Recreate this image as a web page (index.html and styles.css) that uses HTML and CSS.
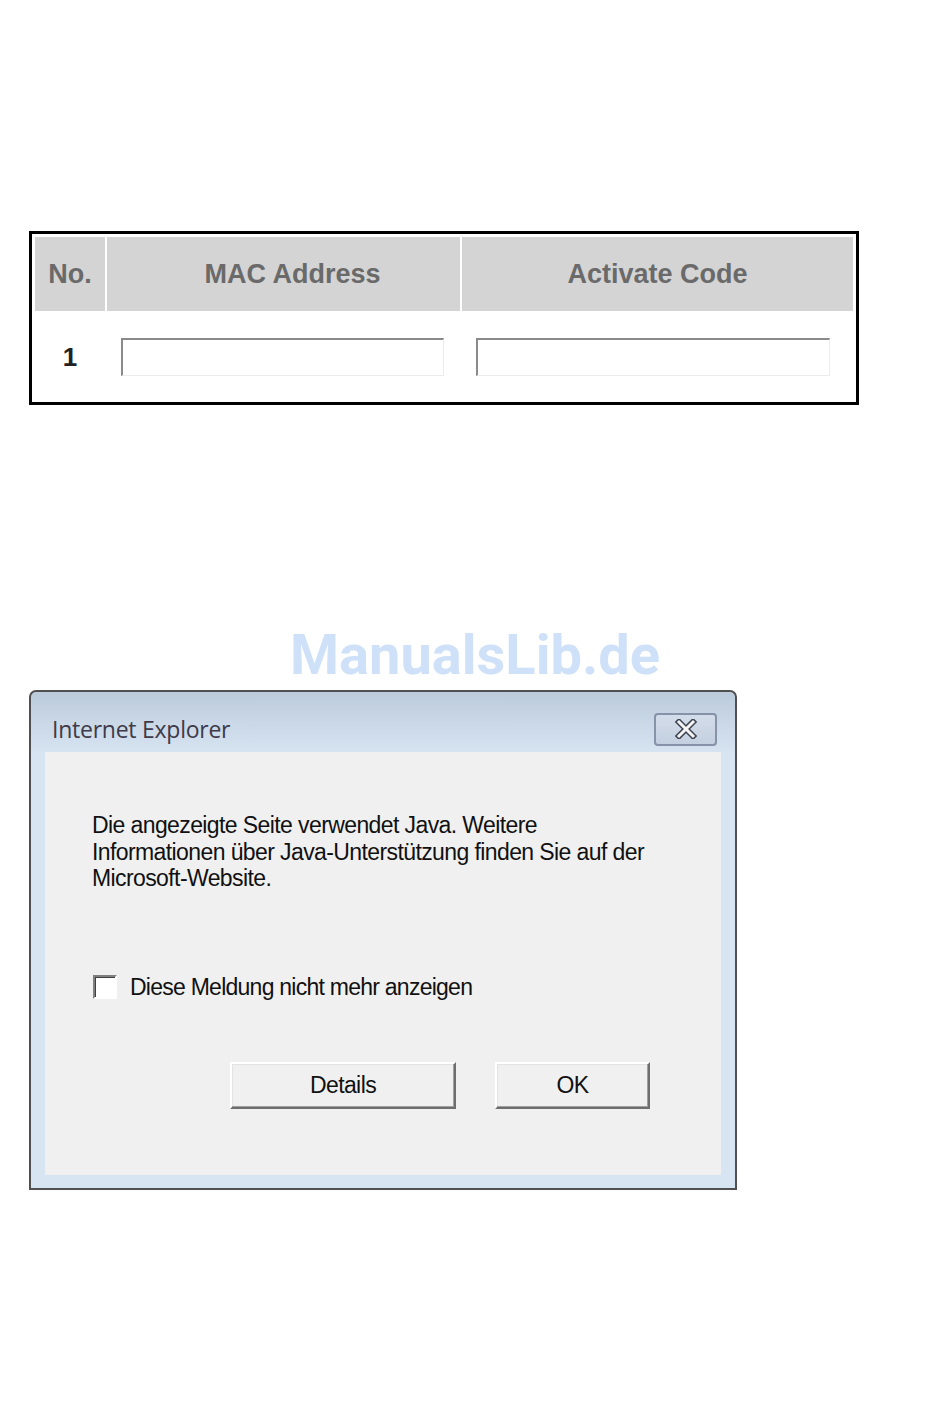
FILE: index.html
```html
<!DOCTYPE html>
<html lang="de">
<head>
  <meta charset="UTF-8" />
  <title>Activate Code</title>
  <link rel="stylesheet" href="styles.css">
</head>
<body>
  <div class="page">
    <table class="code-table">
      <tr>
        <th class="col-no">No.</th>
        <th class="col-mac">MAC Address</th>
        <th class="col-code">Activate Code</th>
      </tr>
      <tr>
        <td class="cell-no">1</td>
        <td><input type="text" class="field field-mac"></td>
        <td><input type="text" class="field field-code"></td>
      </tr>
    </table>

    <div class="watermark">ManualsLib.de</div>

    <div class="dialog">
      <div class="titlebar">
        <span class="title">Internet Explorer</span>
        <button class="close-btn" aria-label="Schließen">
          <svg width="26" height="20" viewBox="0 0 26 20">
            <path d="M6 3 L20 17 M20 3 L6 17" stroke="#3d4350" stroke-width="6" stroke-linecap="square"/>
            <path d="M6 3 L20 17 M20 3 L6 17" stroke="#f4f4f4" stroke-width="3" stroke-linecap="square"/>
          </svg>
        </button>
      </div>
      <div class="panel">
        <p class="message">Die angezeigte Seite verwendet Java. Weitere<br>Informationen über Java-Unterstützung finden Sie auf der<br>Microsoft-Website.</p>
        <label class="check-row">
          <span class="checkbox"></span>
          <span>Diese Meldung nicht mehr anzeigen</span>
        </label>
        <div class="buttons">
          <button class="win-btn btn-details">Details</button>
          <button class="win-btn btn-ok">OK</button>
        </div>
      </div>
    </div>
  </div>
</body>
</html>
```

FILE: styles.css
```css
* { margin:0; padding:0; box-sizing:border-box; }
body { background:#fff; font-family:"Liberation Sans",Arial,sans-serif; }
.page { width:950px; height:1414px; padding-top:231px; }

/* table */
.code-table { margin-left:29px; width:830px; border:3px solid #000; border-spacing:2px; padding:1px; }
.code-table th { background:#d4d4d4; color:#6a6a6a; font-size:27px; font-weight:bold; height:74px; text-align:center; }
.col-no { width:70px; }
.col-mac { width:353px; padding-left:18px; }
.code-table td { height:86px; padding-top:2px; background:#fff; }
.cell-no { text-align:center; font-size:26px; font-weight:bold; color:#222; }
.field { display:block; height:38px; margin-left:14px; border:none; border-top:2px solid #8a8a8a; border-left:2px solid #8a8a8a; border-right:1px solid #ececec; border-bottom:1px solid #ececec; background:#fff; }
.field-mac { width:323px; }
.field-code { width:354px; }

/* watermark */
.watermark { margin-top:220px; text-align:center; font-family:Roboto,"Liberation Sans",sans-serif; font-weight:bold; font-size:56px; line-height:60px; color:#cfe1f8; }

/* dialog */
.dialog { margin-top:5px; margin-left:29px; width:708px; height:500px; border:2px solid #505050; border-radius:7px 7px 0 0; background:linear-gradient(#bccbdb, #d7e4f2 62px, #d7e4f2); display:flex; flex-direction:column; }
.titlebar { height:60px; display:flex; align-items:center; justify-content:space-between; padding:14px 18px 0 21px; }
.title { font-family:"Open Sans","Noto Sans",sans-serif; font-size:23px; letter-spacing:-0.25px; color:#3e3a4a; }
.close-btn { width:63px; height:33px; border:2px solid #8792a8; border-radius:4px; background:linear-gradient(#d3dcea,#c4d0e0); display:flex; align-items:center; justify-content:center; }
.panel { flex:1; margin:0 14px 13px; background:#f0f0f0; padding:60px 0 0 47px; font-size:23px; letter-spacing:-0.6px; color:#111; }
.message { line-height:26.5px; }
.check-row { display:flex; align-items:center; gap:13px; margin-top:82px; margin-left:1px; letter-spacing:-0.75px; }
.checkbox { width:24px; height:24px; background:#fff; border:2px solid #fff; border-top-color:#808080; border-left-color:#808080; box-shadow:inset 1px 1px 0 #404040; }
.buttons { display:flex; gap:39px; margin-top:61px; margin-left:138px; }
.win-btn { height:47px; font-family:"Liberation Sans",Arial,sans-serif; font-size:23px; letter-spacing:-0.6px; color:#111; background:#f0f0f0; border:2px solid #fff; border-right-color:#6e6e6e; border-bottom-color:#6e6e6e; box-shadow:inset -1px -1px 0 #a0a0a0, inset 1px 1px 0 #e3e3e3; }
.btn-details { width:226px; }
.btn-ok { width:155px; }
```
